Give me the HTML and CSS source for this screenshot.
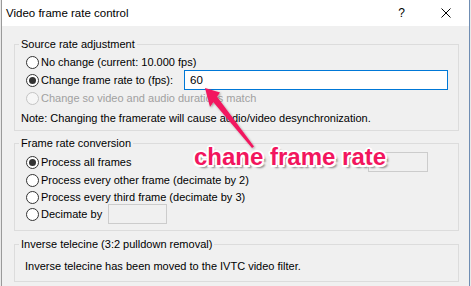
FILE: index.html
```html
<!DOCTYPE html>
<html>
<head>
<meta charset="utf-8">
<link rel="stylesheet" href="styles.css">
</head>
<body>
<div class="screen">
  <div class="window">
    <div class="titlebar">
      <span class="title">Video frame rate control</span>
      <span class="tbtn help">?</span>
      <span class="tbtn close">
        <svg width="10" height="10" viewBox="0 0 10 10"><path d="M0.5 0.5 L9.5 9.5 M9.5 0.5 L0.5 9.5" stroke="#000" stroke-width="1" fill="none"/></svg>
      </span>
    </div>
    <div class="client">
      <fieldset class="group g1">
        <legend>Source rate adjustment</legend>
        <div class="row"><span class="radio"></span><span class="lbl">No change (current: 10.000 fps)</span></div>
        <div class="row"><span class="radio checked"></span><span class="lbl">Change frame rate to (fps):</span><span class="edit active">60</span></div>
        <div class="row disabled"><span class="radio"></span><span class="lbl">Change so video and audio durations match</span></div>
        <div class="note">Note: Changing the framerate will cause audio/video desynchronization.</div>
      </fieldset>
      <fieldset class="group g2">
        <legend>Frame rate conversion</legend>
        <div class="row"><span class="radio checked"></span><span class="lbl">Process all frames</span><span class="edit off far"></span></div>
        <div class="row"><span class="radio"></span><span class="lbl">Process every other frame (decimate by 2)</span></div>
        <div class="row short"><span class="radio"></span><span class="lbl">Process every third frame (decimate by 3)</span></div>
        <div class="row"><span class="radio"></span><span class="lbl">Decimate by</span><span class="edit off near"></span></div>
      </fieldset>
      <fieldset class="group g3">
        <legend>Inverse telecine (3:2 pulldown removal)</legend>
        <div class="info">Inverse telecine has been moved to the IVTC video filter.</div>
      </fieldset>
    </div>
  </div>
  <svg class="arrow" width="471" height="286" viewBox="0 0 471 286">
    <defs>
      <filter id="sh" x="-20%" y="-20%" width="140%" height="140%">
        <feDropShadow dx="1" dy="1" stdDeviation="0.8" flood-color="#000" flood-opacity="0.35"/>
      </filter>
    </defs>
    <g fill="#f2165e" filter="url(#sh)">
      <polygon points="205,88 220,92.5 210,107"/>
      <polygon points="216.5,96 254,146.5 252,148 211.5,100"/>
    </g>
  </svg>
  <div class="callout">chane frame rate</div>
</div>
</body>
</html>
```

FILE: styles.css
```css
* { box-sizing: border-box; }
html, body { margin: 0; padding: 0; }
body {
  background: #e9e9e9;
  font-family: "Liberation Sans", Arial, sans-serif;
  font-size: 11px;
  color: #000;
}
.screen {
  position: relative;
  width: 471px;
  height: 286px;
  overflow: hidden;
}
.window {
  margin-left: 1px;
  width: 469px;
  height: 286px;
  border-left: 1px solid #9a9a9a;
  border-right: 1px solid #6f8db3;
  background: #f0f0f0;
  display: flex;
  flex-direction: column;
}
.titlebar {
  height: 26px;
  background: #fff;
  display: flex;
  align-items: center;
  flex: none;
}
.title {
  flex: 1;
  padding-left: 4px;
  font-size: 11.5px;
}
.tbtn {
  width: 46px;
  height: 26px;
  display: flex;
  align-items: center;
  justify-content: center;
}
.help { font-size: 12px; padding-left: 3px; }
.close svg { display: block; }
.client {
  flex: 1;
  padding: 10px 10px 0 12px;
}
.group {
  margin: 0;
  padding: 0;
  border: 1px solid #dcdcdc;
  min-width: 0;
}
.group legend {
  margin-left: 4px;
  padding: 0 2px;
  line-height: 16px;
  height: 16px;
}
.g1 { padding-top: 1px; padding-bottom: 3px; }
.g2 { margin-top: 4px; padding-top: 2px; padding-bottom: 7px; }
.g3 { margin-top: 5px; padding-top: 5px; padding-bottom: 6px; }
.row {
  display: flex;
  align-items: center;
  height: 18px;
  padding-left: 11px;
}
.row.short { height: 16px; }
.radio {
  position: relative;
  flex: none;
  width: 13px;
  height: 13px;
  border: 1px solid #333;
  border-radius: 50%;
  background: #fff;
  margin-right: 2px;
}
.radio.checked::after {
  content: "";
  position: absolute;
  left: 2px;
  top: 2px;
  width: 7px;
  height: 7px;
  border-radius: 50%;
  background: #333;
}
.lbl { white-space: nowrap; }
.disabled { color: #a0a0a0; }
.disabled .radio { border-color: #c4c4c4; background: #f6f6f6; }
.edit {
  flex: none;
  height: 20px;
  line-height: 18px;
  border: 1px solid #ccc;
  background: #f0f0f0;
}
.edit.active {
  margin-left: auto;
  margin-right: 10px;
  width: 264px;
  border-color: #0078d7;
  background: #fff;
  padding-left: 5px;
  font-size: 11.5px;
}
.edit.far { margin-left: auto; margin-right: 30px; width: 60px; }
.edit.near { margin-left: 6px; width: 59px; }
.note {
  margin-top: 2px;
  height: 18px;
  line-height: 18px;
  padding-left: 6px;
}
.info {
  height: 18px;
  line-height: 18px;
  padding-left: 10px;
}
.arrow {
  position: absolute;
  left: 0;
  top: 0;
  pointer-events: none;
}
.callout {
  position: absolute;
  left: 194px;
  top: 145px;
  font-family: "Liberation Sans", Arial, sans-serif;
  font-weight: bold;
  font-size: 24px;
  line-height: 24px;
  color: #f2165e;
  white-space: nowrap;
  text-shadow:
    -2px 0 0 #fff, 2px 0 0 #fff, 0 -2px 0 #fff, 0 2px 0 #fff,
    -1.5px -1.5px 0 #fff, 1.5px -1.5px 0 #fff, -1.5px 1.5px 0 #fff, 1.5px 1.5px 0 #fff,
    3px 3px 2px rgba(0,0,0,0.45);
}
```
